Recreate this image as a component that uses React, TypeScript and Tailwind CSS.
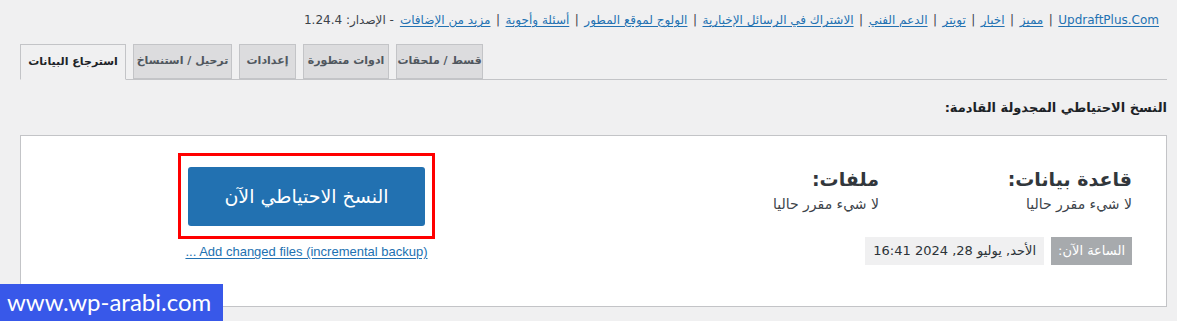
import React from "react";

const links = [
  "UpdraftPlus.Com",
  "مميز",
  "اخبار",
  "تويتر",
  "الدعم الفني",
  "الاشتراك في الرسائل الإخبارية",
  "الولوج لموقع المطور",
  "أسئلة وأجوبة",
  "مزيد من الإضافات",
];

// visual order left to right
const tabs = [
  { label: "استرجاع البيانات", active: true, w: "w-[106px]" },
  { label: "ترحيل / استنساخ", active: false, w: "w-[99px]" },
  { label: "إعدادات", active: false, w: "w-[57px]" },
  { label: "ادوات متطورة", active: false, w: "w-[86px]" },
  { label: "قسط / ملحقات", active: false, w: "w-[87px]" },
];

export default function App() {
  return (
    <div className="relative w-[1177px] h-[321px] overflow-hidden bg-[#f0f0f1] font-['DejaVu_Sans',sans-serif] text-[#3c434a]">
      {/* top links */}
      <div dir="rtl" className="flex items-center h-[20px] mt-[10px] pr-[18px] text-[12px] leading-[20px]">
        {links.map((l, i) => (
          <React.Fragment key={l}>
            {i > 0 && <span className="mx-[5.5px] text-[#3c434a]">|</span>}
            <a className="text-[#2271b1] underline underline-offset-2">{l}</a>
          </React.Fragment>
        ))}
        <span className="mr-[6px]">- الإصدار: 1.24.4</span>
      </div>

      {/* tabs */}
      <div className="flex items-end gap-[7px] h-[35px] mt-[15px] ml-[20px] mr-[10px] border-b border-[#c3c4c7]">
        {tabs.map((t) => (
          <div
            key={t.label}
            dir="rtl"
            className={`${t.w} flex items-center justify-center border border-[#c3c4c7] text-[11px] font-bold ${
              t.active
                ? "bg-[#f0f0f1] border-b-[#f0f0f1] text-[#1d2327] -mb-px h-[36px]"
                : "bg-[#dcdcde] text-[#50575e] h-[35px]"
            }`}
          >
            {t.label}
          </div>
        ))}
      </div>

      {/* heading */}
      <div dir="rtl" className="pr-[10px] mt-[19px] text-[13px] font-bold text-[#1d2327] leading-[18px]">
        النسخ الاحتياطي المجدولة القادمة:
      </div>

      {/* panel */}
      <div
        dir="rtl"
        className="mt-[18px] ml-[20px] mr-[10px] h-[172px] bg-white border border-[#c3c4c7] flex pr-[34px] pt-[30px]"
      >
        <div className="w-[697px] flex flex-col">
          <div className="flex">
            <div className="w-[253px] flex flex-col items-start">
              <div className="text-[19px] font-bold text-[#32373c] leading-[26px]">قاعدة بيانات:</div>
              <div className="text-[14px] mt-[2px] leading-[20px]">لا شيء مقرر حاليا</div>
            </div>
            <div className="flex flex-col items-start">
              <div className="text-[19px] font-bold text-[#32373c] leading-[26px]">ملفات:</div>
              <div className="text-[14px] mt-[2px] leading-[20px]">لا شيء مقرر حاليا</div>
            </div>
          </div>
          <div className="flex gap-[7px] h-[28px] mt-[23px] text-[13px]">
            <div className="bg-[#a7aaad] text-white px-[7px] flex items-center">الساعة الآن:</div>
            <div className="bg-[#f0f0f1] text-[#2c3338] px-[8px] flex items-center">الأحد, يوليو 28, 2024 16:41</div>
          </div>
        </div>
        <div className="flex flex-col items-center -mt-[13px]">
          <div className="w-[257px] h-[86px] border-[3px] border-[#ff0000] flex items-center justify-center">
            <button className="w-[237px] h-[59px] rounded-[3px] bg-[#2271b1] text-white text-[19px] leading-none">
              النسخ الاحتياطي الآن
            </button>
          </div>
          <a dir="ltr" className="mt-[3px] text-[13px] text-[#2271b1] underline underline-offset-2 font-['Liberation_Sans',sans-serif]">
            ... Add changed files (incremental backup)
          </a>
        </div>
      </div>

      {/* watermark */}
      <div className="absolute left-0 bottom-0 w-[223px] h-[37px] bg-[#3858e9] text-white text-[24px] leading-[36px] pl-[7px] font-['Lato',sans-serif]">
        www.wp-arabi.com
      </div>
    </div>
  );
}
